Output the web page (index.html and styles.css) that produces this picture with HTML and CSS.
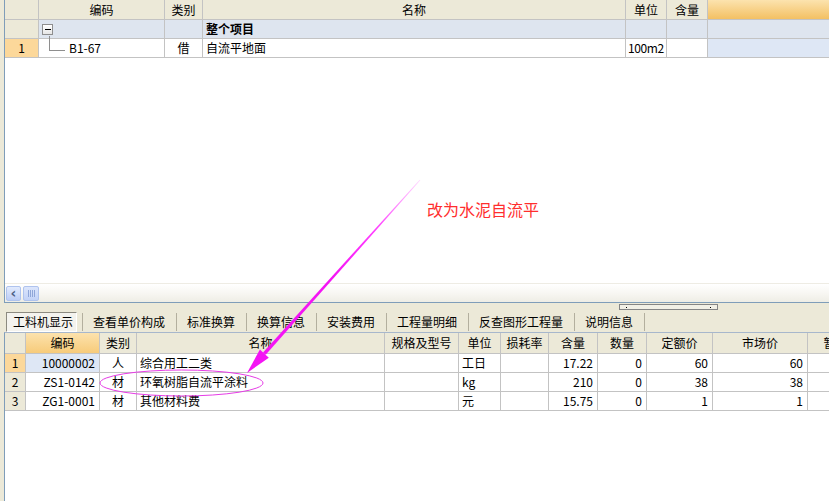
FILE: index.html
```html
<!DOCTYPE html>
<html lang="zh">
<head>
<meta charset="utf-8">
<title>工料机显示</title>
<link rel="stylesheet" href="styles.css">
</head>
<body>
<div class="app">
  <section class="top-panel">
    <div class="grid top-grid">
      <div class="c hd"></div>
      <div class="c hd">编码</div>
      <div class="c hd">类别</div>
      <div class="c hd">名称</div>
      <div class="c hd">单位</div>
      <div class="c hd">含量</div>
      <div class="c hd-sel"></div>

      <div class="c rn"></div>
      <div class="c grp"><span class="tree-box"></span></div>
      <div class="c grp"></div>
      <div class="c grp bold">整个项目</div>
      <div class="c grp"></div>
      <div class="c grp"></div>
      <div class="c grp"></div>

      <div class="c rn rn-sel">1</div>
      <div class="c code-cell"><span class="tree-line"></span><span class="code">B1-67</span></div>
      <div class="c ctr">借</div>
      <div class="c">自流平地面</div>
      <div class="c tight">100m2</div>
      <div class="c"></div>
      <div class="c blue"></div>
    </div>
    <div class="spacer"></div>
    <div class="hscroll">
      <span class="sb-btn">&#x2039;</span>
      <span class="sb-thumb"><i></i><i></i><i></i><i></i></span>
    </div>
  </section>

  <div class="splitter"><span class="grip"><i></i><i></i></span></div>

  <nav class="tabs">
    <span class="tab-active">工料机显示</span>
    <span class="tab">查看单价构成</span>
    <span class="tab">标准换算</span>
    <span class="tab">换算信息</span>
    <span class="tab">安装费用</span>
    <span class="tab">工程量明细</span>
    <span class="tab">反查图形工程量</span>
    <span class="tab last">说明信息</span>
  </nav>

  <section class="bottom-panel">
    <div class="grid bottom-grid">
      <div class="c hd"></div>
      <div class="c hd-sel2">编码</div>
      <div class="c hd">类别</div>
      <div class="c hd">名称</div>
      <div class="c hd">规格及型号</div>
      <div class="c hd">单位</div>
      <div class="c hd">损耗率</div>
      <div class="c hd">含量</div>
      <div class="c hd">数量</div>
      <div class="c hd">定额价</div>
      <div class="c hd">市场价</div>
      <div class="c hd">暂估价</div>

      <div class="c rn rn-sel">1</div>
      <div class="c r blue">10000002</div>
      <div class="c ctr">人</div>
      <div class="c">综合用工二类</div>
      <div class="c"></div>
      <div class="c">工日</div>
      <div class="c"></div>
      <div class="c r">17.22</div>
      <div class="c r">0</div>
      <div class="c r">60</div>
      <div class="c r">60</div>
      <div class="c"></div>

      <div class="c rn">2</div>
      <div class="c r">ZS1-0142</div>
      <div class="c ctr">材</div>
      <div class="c">环氧树脂自流平涂料</div>
      <div class="c"></div>
      <div class="c">kg</div>
      <div class="c"></div>
      <div class="c r">210</div>
      <div class="c r">0</div>
      <div class="c r">38</div>
      <div class="c r">38</div>
      <div class="c"></div>

      <div class="c rn">3</div>
      <div class="c r">ZG1-0001</div>
      <div class="c ctr">材</div>
      <div class="c">其他材料费</div>
      <div class="c"></div>
      <div class="c">元</div>
      <div class="c"></div>
      <div class="c r">15.75</div>
      <div class="c r">0</div>
      <div class="c r">1</div>
      <div class="c r">1</div>
      <div class="c"></div>
    </div>
  </section>
</div>

<svg class="annot" width="829" height="501" viewBox="0 0 829 501">
  <defs>
    <linearGradient id="shaft" gradientUnits="userSpaceOnUse" x1="420" y1="180" x2="247" y2="373">
      <stop offset="0" stop-color="#FF00FF" stop-opacity="0.15"/>
      <stop offset="0.25" stop-color="#FF00FF" stop-opacity="0.75"/>
      <stop offset="0.5" stop-color="#F414F4" stop-opacity="1"/>
      <stop offset="1" stop-color="#F414F4" stop-opacity="1"/>
    </linearGradient>
  </defs>
  <text class="note" x="427" y="216">改为水泥自流平</text>
  <ellipse cx="181.5" cy="383" rx="81.5" ry="13" fill="none" stroke="#E63CE6" stroke-width="1"/>
  <path d="M420.3,180.3 L419.7,179.7 L263.0,352.4 L265.7,354.8 Z" fill="url(#shaft)"/>
  <path d="M247,373 L259.9,349.6 L268.8,357.7 Z" fill="#F414F4"/>
</svg>
</body>
</html>
```

FILE: styles.css
```css
html, body {
  margin: 0;
  padding: 0;
}

body {
  width: 829px;
  height: 501px;
  overflow: hidden;
  position: relative;
  background: #ECE9D8;
  font-family: "Noto Sans CJK SC", "Liberation Sans", sans-serif;
  font-size: 12px;
  color: #000;
}

.app {
  display: flex;
  flex-direction: column;
  height: 501px;
  padding-left: 4px;
  box-sizing: border-box;
}

/* ---------- top panel ---------- */
.top-panel {
  flex: none;
  height: 303px;
  display: flex;
  flex-direction: column;
  background: #fff;
  border-left: 1px solid #7F9DB9;
  border-bottom: 1px solid #7F9DB9;
  box-sizing: border-box;
  overflow: hidden;
}

.grid {
  display: grid;
  width: max-content;
}

.top-grid {
  grid-template-columns: 34px 126px 38px 423px 41px 41px 200px;
  grid-template-rows: 20px 19px 19px;
}

.bottom-grid {
  grid-template-columns: 21px 74px 37px 248px 74px 42px 48px 49px 49px 66px 95px 68px;
  grid-template-rows: 21px 19px 19px 19px;
}

.c {
  box-sizing: border-box;
  border-right: 1px solid #C3C3C3;
  border-bottom: 1px solid #C3C3C3;
  padding: 0 3px;
  display: flex;
  align-items: center;
  white-space: nowrap;
  overflow: hidden;
  line-height: 1;
}

.tight {
  padding: 0 0 0 2px;
  letter-spacing: -0.4px;
}

.hd {
  background: #ECE9D8;
  justify-content: center;
}

.hd-sel {
  background: linear-gradient(#FCE3AE, #F3C063);
}

.hd-sel2 {
  background: linear-gradient(#FCE2AD, #F7CB7A);
  justify-content: center;
}

.rn {
  background: #ECE9D8;
  justify-content: center;
}

.rn-sel {
  background: #FCD89A;
}

.grp {
  background: #DEE5EF;
}

.bold {
  font-weight: bold;
}

.blue {
  background: #DEE7F5;
}

.ctr {
  justify-content: center;
}

.r {
  justify-content: flex-end;
  padding-right: 4px;
}

.tree-box {
  width: 11px;
  height: 11px;
  box-sizing: border-box;
  border: 1px solid #8E8E8E;
  background: linear-gradient(#FFFFFF, #E6E6E6);
  display: flex;
  align-items: center;
  justify-content: center;
}

.tree-box::before {
  content: "";
  width: 6px;
  height: 1px;
  background: #000;
}

.code-cell {
  overflow: visible;
  padding-left: 10px;
}

.tree-line {
  align-self: flex-start;
  margin-top: -3px;
  width: 16px;
  height: 15px;
  box-sizing: border-box;
  border-left: 1px solid #8E8E8E;
  border-bottom: 1px solid #8E8E8E;
  flex: none;
}

.code {
  margin-left: 4px;
}

.spacer {
  flex: 1;
}

.hscroll {
  flex: none;
  height: 18px;
  display: flex;
  align-items: center;
  gap: 2px;
  padding-left: 1px;
  background: linear-gradient(#FFFFFF, #F6F5F0 60%, #EEEDE5);
  border-top: 1px solid #EEECE4;
}

.sb-btn {
  width: 15px;
  height: 15px;
  box-sizing: border-box;
  border: 1px solid #AFC3EE;
  border-radius: 2px;
  background: linear-gradient(#E2EBFD, #BCCDF6);
  color: #4D6185;
  font-family: "DejaVu Sans", sans-serif;
  font-weight: bold;
  font-size: 14px;
  display: flex;
  align-items: center;
  justify-content: center;
  line-height: 1;
}

.sb-thumb {
  width: 16px;
  height: 15px;
  box-sizing: border-box;
  border: 1px solid #AFC3EE;
  border-radius: 2px;
  background: linear-gradient(#DCE6FC, #C2D2F7);
  display: flex;
  align-items: center;
  justify-content: center;
  gap: 1px;
}

.sb-thumb i {
  width: 1px;
  height: 7px;
  background: #8FA6D8;
}

/* ---------- splitter ---------- */
.splitter {
  flex: none;
  height: 8px;
  display: flex;
  align-items: center;
  padding-left: 615px;
}

.grip {
  width: 99px;
  height: 6px;
  box-sizing: border-box;
  border: 1px solid #858585;
  background: #F2F0E6;
  display: flex;
  align-items: center;
  justify-content: space-between;
  padding: 0 6px;
}

.grip i {
  width: 1px;
  height: 1px;
  background: #000;
}

/* ---------- tabs ---------- */
.tabs {
  flex: none;
  height: 21px;
  display: flex;
  align-items: center;
  padding-left: 2px;
}

.tab-active {
  height: 20px;
  box-sizing: border-box;
  padding: 0 3px 0 6px;
  margin-right: 5px;
  border: 1px solid;
  border-color: #8C8A80 #FFFFFF #FFFFFF #8C8A80;
  background: #F4F3EE;
  display: flex;
  align-items: center;
  line-height: 1;
}

.tab {
  height: 18px;
  padding: 0 11px 0 10px;
  border-left: 1px solid #B3AF9E;
  display: flex;
  align-items: center;
  line-height: 1;
}

.tab.last {
  border-right: 1px solid #B3AF9E;
}

/* ---------- bottom panel ---------- */
.bottom-panel {
  flex: 1;
  background: #fff;
  border-left: 1px solid #7F9DB9;
  border-top: 1px solid #A7B7CC;
  overflow: hidden;
}

/* ---------- annotation overlay ---------- */
.annot {
  position: absolute;
  left: 0;
  top: 0;
  pointer-events: none;
}

.note {
  font-family: "Noto Sans CJK SC", sans-serif;
  font-size: 16px;
  fill: #FF2E2E;
}
```
